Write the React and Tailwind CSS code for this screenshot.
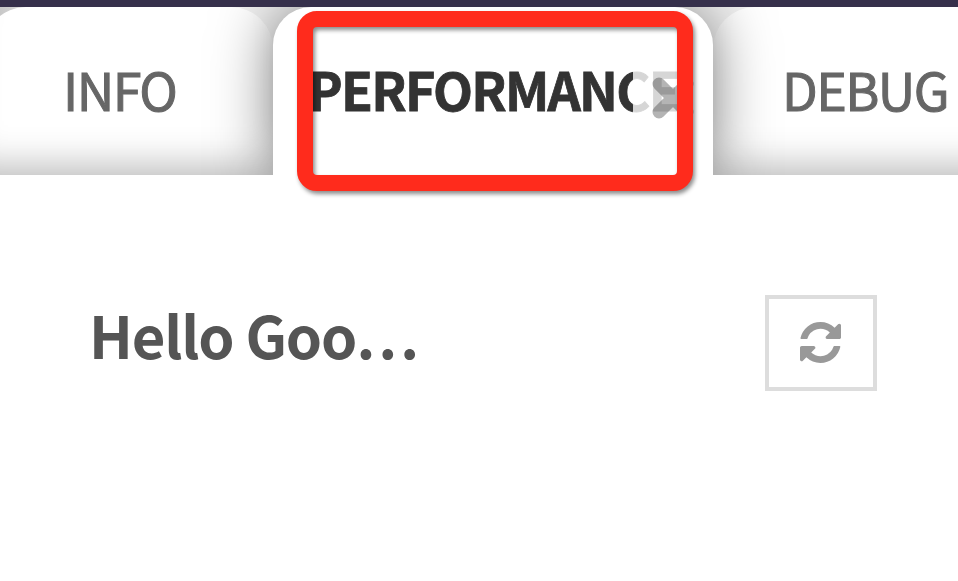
import React from "react";

const FONT = "font-['Noto_Sans_CJK_SC','Source_Sans_Pro',sans-serif]";

const TAB_LABEL =
  "-mt-[5px] whitespace-nowrap text-[52px] leading-none tracking-[-1.6px] text-[#666] [-webkit-text-stroke:1px_#666]";

function Tabs() {
  return (
    <nav className="relative flex h-[168px] shrink-0 overflow-hidden bg-[linear-gradient(to_right,#c8c8c8,#f2f2f2_60px)]">
      <div className="-ml-[16px] flex h-full w-[289px] shrink-0 items-center rounded-t-[42px] bg-white pl-[79px] shadow-[inset_0_-30px_36px_-20px_#bdbdbd]">
        <span className={TAB_LABEL}>INFO</span>
      </div>
      <div className="relative z-10 flex h-full w-[440px] shrink-0 items-center rounded-t-[38px] bg-white pl-[35px] shadow-[0_0_60px_rgba(0,0,0,0.5)]">
        <svg className="absolute left-[378px] top-[69px]" width="44" height="44" viewBox="0 0 44 44" fill="none" stroke="#b4b4b4" strokeWidth="13" strokeLinecap="round">
          <path d="M8 8 36 36M36 8 8 36" />
        </svg>
        <span className="relative -mt-[5px] whitespace-nowrap text-[52px] font-bold leading-none tracking-[-1.75px] text-[#333] [-webkit-text-stroke:0.8px_#333] [mask-image:linear-gradient(to_right,#000_325px,rgba(0,0,0,0.2)_325px)]">
          PERFORMANCE
        </span>
      </div>
      <div className="flex h-full w-[290px] shrink-0 items-center rounded-t-[42px] bg-white pl-[69px] shadow-[inset_0_-30px_36px_-20px_#bdbdbd]">
        <span className={TAB_LABEL}>DEBUG</span>
      </div>
    </nav>
  );
}

function RefreshButton() {
  return (
    <button aria-label="Refresh" className="flex h-[96px] w-[112px] items-center justify-center border-4 border-[#ddd] bg-white">
      <svg className="-mt-[2px] -ml-[2px]" width="41" height="41" viewBox="0 0 1536 1536" fill="#999">
        <path d="M1511 928q0 5-1 7-64 268-268 434.500T764 1536q-146 0-282.500-55T238 1324l-129 129q-19 19-45 19t-45-19-19-45V960q0-26 19-45t45-19h448q26 0 45 19t19 45-19 45l-137 137q71 66 161 102t187 36q134 0 250-65t186-179q11-17 53-117 8-23 30-23h192q13 0 22.500 9.500t9.500 22.500zm25-800v448q0 26-19 45t-45 19h-448q-26 0-45-19t-19-45 19-45l138-138Q969 256 768 256q-134 0-250 65T332 500q-11 17-53 117-8 23-30 23H50q-13 0-22.500-9.500T18 608v-7q65-268 270-434.500T768 0q146 0 284 55.500T1297 212l130-129q19-19 45-19t45 19 19 45z" />
      </svg>
    </button>
  );
}

export default function App() {
  return (
    <div className={`relative flex h-[581px] w-[958px] flex-col overflow-hidden bg-white ${FONT}`}>
      <div className="h-[7px] shrink-0 bg-[#36304b]" />
      <Tabs />
      <main className="flex items-start justify-between pl-[89px] pr-[81px] pt-[120px]">
        <h1 className="mt-[10px] whitespace-nowrap text-[58px] font-bold leading-none tracking-[-1.2px] text-[#555]">Hello Goo…</h1>
        <RefreshButton />
      </main>
      <div className="absolute left-[297px] top-[11px] z-20 h-[180px] w-[396px] rounded-[20px] border-[16px] border-[#ff2b1c] drop-shadow-[2px_3px_2px_rgba(0,0,0,0.45)]" />
    </div>
  );
}
